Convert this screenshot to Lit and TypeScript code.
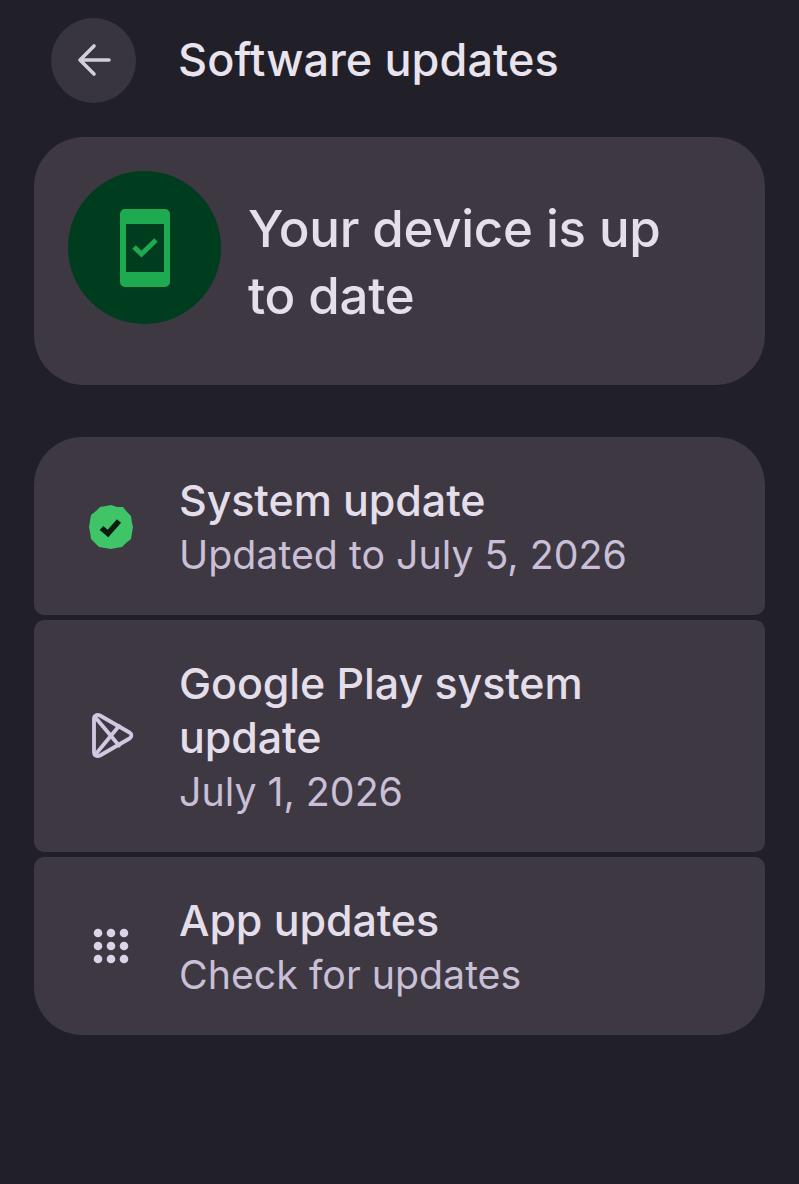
import { LitElement, html, svg, css } from "lit";
import { customElement } from "lit/decorators.js";

@customElement("app-root")
export class AppRoot extends LitElement {
  static styles = css`
    :host {
      display: block;
      height: 1184px;
      overflow: hidden;
      background: #211f28;
      font-family: "Inter", "Roboto", sans-serif;
      padding: 18px 34px 0;
      box-sizing: border-box;
    }
    .header { display: flex; align-items: center; height: 85px; margin-bottom: 34px; padding-left: 17px; }
    .back {
      width: 85px; height: 85px; border-radius: 50%; background: #38353f; box-sizing: border-box; padding-bottom: 2px;
      display: flex; align-items: center; justify-content: center; flex: none;
    }
    .title { margin: 0 0 2px 42px; font-size: 45px; font-weight: 500; letter-spacing: 0.1px; color: #e9e3ee; white-space: nowrap; }
    .hero {
      display: flex; align-items: flex-start; height: 248px; border-radius: 50px;
      background: #3d3842; padding: 34px 0 0 34px; box-sizing: border-box; margin-bottom: 52px;
    }
    .circle {
      width: 153px; height: 153px; border-radius: 50%; background: #003c1e;
      display: flex; align-items: center; justify-content: center; flex: none;
    }
    .hero-text { margin-left: 27px; margin-top: 24px; font-size: 51px; font-weight: 500; letter-spacing: -0.3px; line-height: 67px; color: #e5deeb; width: 440px; }
    .list { display: flex; flex-direction: column; gap: 5px; }
    .row {
      display: flex; align-items: center; background: #3d3842; border-radius: 10px; padding: 0 0 0 54px;
      box-sizing: border-box; min-height: 178px;
    }
    .row.first { border-radius: 48px 48px 10px 10px; }
    .row.last { border-radius: 10px 10px 48px 48px; }
    .row.tall { min-height: 232px; }
    .icon { width: 46px; height: 46px; flex: none; display: flex; align-items: center; justify-content: center; }
    .check { margin-top: 2px; }
    .texts { margin-left: 45px; padding-top: 2px; width: 470px; }
    .t { font-size: 43px; font-weight: 500; letter-spacing: -0.1px; line-height: 54px; color: #e4deeb; }
    .s { font-size: 39.3px; line-height: 55px; color: #c9bfd6; }
    svg { display: block; }
  `;

  render() {
    return html`
      <div class="header">
        <div class="back">
          <svg width="34" height="34" viewBox="0 0 34 34" fill="none" stroke="#d4cddc" stroke-width="3.600" stroke-linecap="round" stroke-linejoin="round">
            <path d="M32 17H3M17 3 3 17l14 14" />
          </svg>
        </div>
        <div class="title">Software updates</div>
      </div>
      <div class="hero">
        <div class="circle">
          <svg width="50" height="78" viewBox="0 0 50 78">
            <path fill="#1eaa50" fill-rule="evenodd" d="M5 0h40a5 5 0 0 1 5 5v68a5 5 0 0 1-5 5H5a5 5 0 0 1-5-5V5a5 5 0 0 1 5-5ZM6 15v48h38V15Z" />
            <path fill="none" stroke="#1eaa50" stroke-width="5" d="m14 38 7.500 7L36 31" />
          </svg>
        </div>
        <div class="hero-text">Your device is up to date</div>
      </div>
      <div class="list">
        <div class="row first">
          <div class="icon check">
            <svg width="44" height="44" viewBox="0 0 44 44">
              <polygon fill="#3fc468" points="22,0 28,2 34,2 38,7 42,11 43,18 44,22 43,28 42,34 37,38 33,42 27,43 22,44 16,43 10,42 6,38 2,34 1,27 0,22 1,16 2,10 7,6 11,2 17,1" />
              <path fill="none" stroke="#0c1a10" stroke-width="5.500" d="m12.500 23 6.500 5.500L30 16" />
            </svg>
          </div>
          <div class="texts"><div class="t">System update</div><div class="s">Updated to July 5, 2026</div></div>
        </div>
        <div class="row tall">
          <div class="icon">
            <svg width="46" height="48" viewBox="0 0 46 48" fill="none" stroke="#d3c8e2" stroke-width="3.800" stroke-linejoin="round" stroke-linecap="round">
              <path d="M6 7c0-3.500 3-5 6-3.500l29.500 17c2.500 1.500 2.500 4.500 0 6L12 43.500C9 45 6 43.500 6 40Z" />
              <path d="M7 5 31 33.500M7 43 31 14" />
            </svg>
          </div>
          <div class="texts"><div class="t">Google Play system update</div><div class="s">July 1, 2026</div></div>
        </div>
        <div class="row last">
          <div class="icon">
            <svg width="36" height="36" viewBox="0 0 36 36" fill="#dcd3e8">
              ${[5, 18, 31].flatMap((y) => [5, 18, 31].map((x) => svg`<circle cx=${x} cy=${y} r="4.300" />`))}
            </svg>
          </div>
          <div class="texts"><div class="t">App updates</div><div class="s">Check for updates</div></div>
        </div>
      </div>
    `;
  }
}
